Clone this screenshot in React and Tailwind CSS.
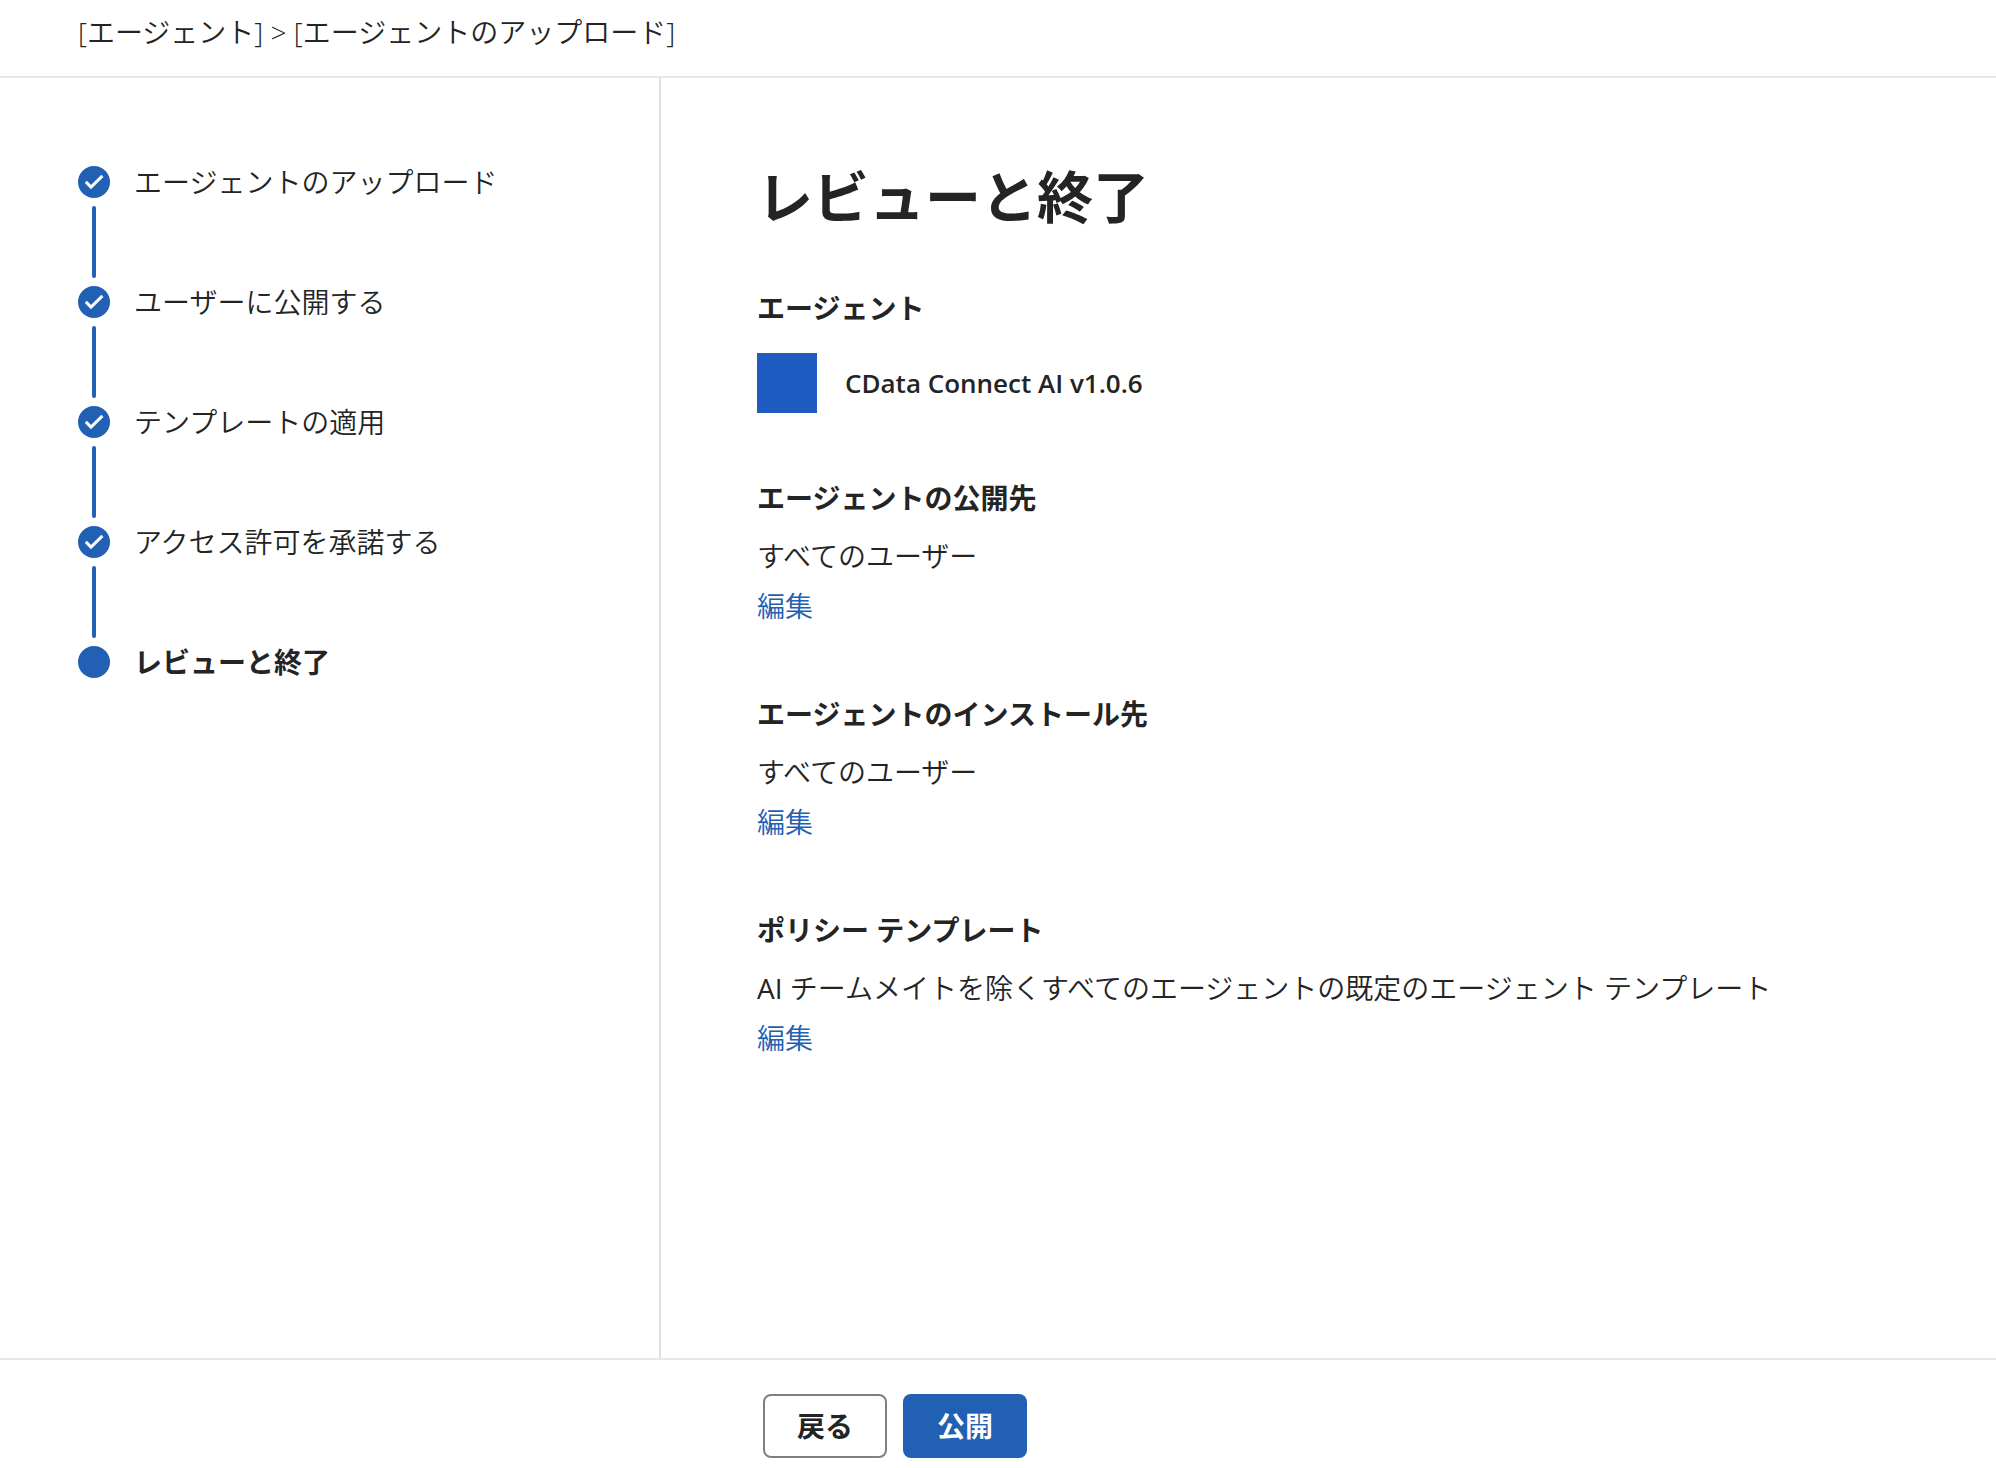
const steps = [
  'エージェントのアップロード',
  'ユーザーに公開する',
  'テンプレートの適用',
  'アクセス許可を承諾する',
  'レビューと終了',
];

const sections = [
  { title: 'エージェントの公開先', value: 'すべてのユーザー' },
  { title: 'エージェントのインストール先', value: 'すべてのユーザー' },
  {
    title: 'ポリシー テンプレート',
    value: (
      <>
        <span className="font-normal">AI</span> チームメイトを除くすべてのエージェントの既定のエージェント テンプレート
      </>
    ),
  },
];

function Step({ label, last }) {
  return (
    <li className="flex gap-6">
      <div className="flex w-8 flex-col items-center">
        <svg className="size-8" viewBox="0 0 32 32" aria-hidden="true">
          <circle cx="16" cy="16" r="16" fill="#2160b3" />
          {!last && (
            <path d="M7.8 15.9L13 21.1L24.4 9.9" fill="none" stroke="#fff" strokeWidth="2.9" strokeLinejoin="miter" />
          )}
        </svg>
        {!last && <div className="my-2 h-18 w-1 rounded-full bg-[#2160b3]" />}
      </div>
      <span className={last ? 'leading-8 font-bold' : 'leading-8'}>{label}</span>
    </li>
  );
}

export default function App() {
  return (
    <div className="flex min-h-screen flex-col bg-white font-['Open_Sans','Noto_Sans_CJK_JP',sans-serif] text-[28px] font-[350] text-[#242424]" lang="ja">
      <header className="border-b-2 border-[#e8e8e8] px-[78px] pt-3 pb-6 leading-10">[エージェント] &gt; [エージェントのアップロード]</header>
      <div className="flex grow">
        <nav className="w-[661px] shrink-0 border-r-2 border-[#e0e0e0] px-[78px] pt-[88px]" aria-label="手順">
          <ol>
            {steps.map((s, i) => (
              <Step key={s} label={s} last={i === steps.length - 1} />
            ))}
          </ol>
        </nav>
        <main className="grow px-24 pt-[78px]">
          <h1 className="text-[56px] leading-20 font-bold">レビューと終了</h1>
          <section className="mt-[52px]">
            <h2 className="leading-10 font-bold">エージェント</h2>
            <div className="mt-[25px] flex items-center gap-7">
              <div className="size-[60px] bg-[#1f5cc2]" />
              <p className="text-[26px] leading-10 font-semibold">CData Connect AI v1.0.6</p>
            </div>
          </section>
          <div className="mt-[65px] flex flex-col gap-[68px]">
            {sections.map((s) => (
              <section key={s.title} className="flex flex-col items-start">
                <h2 className="leading-10 font-bold">{s.title}</h2>
                <p className="mt-4 leading-11">{s.value}</p>
                <a href="#edit" className="mt-2 leading-10 text-[#2160b3]">編集</a>
              </section>
            ))}
          </div>
        </main>
      </div>
      <footer className="flex gap-4 border-t-2 border-[#e8e8e8] pt-[34px] pb-2.5 pl-[763px]">
        <button type="button" className="h-16 w-31 rounded-lg border-2 border-[#808080] font-bold">戻る</button>
        <button type="button" className="h-16 w-31 rounded-lg bg-[#2160b3] font-bold text-white">公開</button>
      </footer>
    </div>
  );
}
